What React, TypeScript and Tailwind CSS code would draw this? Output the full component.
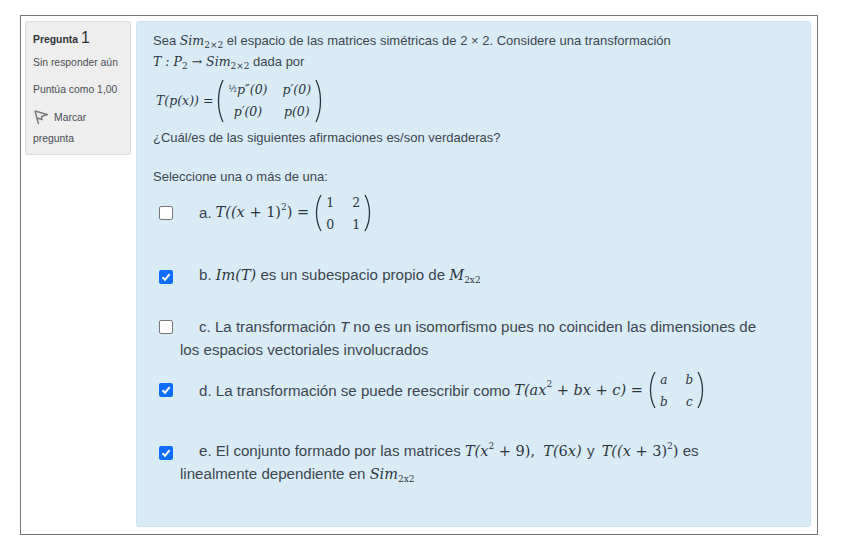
import React from "react";

const SANS = "font-['Liberation_Sans',Arial,sans-serif]";

// math runs: wide slab italic stands in for the MathJax TeX glyphs
const M: React.FC<{ children: React.ReactNode; className?: string }> = ({ children, className = "" }) => (
  <span className={`font-['DejaVu_Serif',serif] italic text-[#2c353e] whitespace-nowrap indent-0 leading-none ${className}`}>{children}</span>
);

const N: React.FC<{ children: React.ReactNode }> = ({ children }) => <span className="not-italic">{children}</span>;

const Sub: React.FC<{ children: React.ReactNode }> = ({ children }) => (
  <sub className="text-[9px] align-[-1px] leading-none not-italic">{children}</sub>
);

const Sup: React.FC<{ children: React.ReactNode }> = ({ children }) => (
  <sup className="text-[9px] align-[3px] leading-none not-italic">{children}</sup>
);

const Paren: React.FC<{ side: "l" | "r"; h: number }> = ({ side, h }) => (
  <svg width="9" height={h} viewBox={`0 0 9 ${h}`} className="shrink-0">
    <path
      d={side === "l" ? `M8 1 C2 ${h * 0.3} 2 ${h * 0.7} 8 ${h - 1}` : `M1 1 C7 ${h * 0.3} 7 ${h * 0.7} 1 ${h - 1}`}
      fill="none"
      stroke="#2c353e"
      strokeWidth="1.3"
    />
  </svg>
);

const Matrix: React.FC<{ rows: React.ReactNode[][]; h: number; gap: string }> = ({ rows, h, gap }) => (
  <span className="inline-flex items-center align-middle indent-0">
    <Paren side="l" h={h} />
    <span className={`inline-grid grid-cols-[auto_auto] ${gap} px-[4px] text-center`}>
      {rows.flat().map((c, i) => (
        <span key={i} className="leading-[22px]">
          {c}
        </span>
      ))}
    </span>
    <Paren side="r" h={h} />
  </span>
);

const Box: React.FC<{ checked?: boolean }> = ({ checked }) =>
  checked ? (
    <span className="inline-flex w-[14px] h-[14px] mr-[26px] rounded-[2px] bg-[#0d6efd] items-center justify-center align-[-2px] indent-0 shrink-0">
      <svg width="10" height="10" viewBox="0 0 10 10">
        <path d="M1.5 5.2 L4 7.8 L8.6 2.2" fill="none" stroke="#fff" strokeWidth="2" />
      </svg>
    </span>
  ) : (
    <span className="inline-block w-[14px] h-[14px] mr-[26px] rounded-[2px] bg-white border border-[#777] align-[-2px] indent-0 shrink-0" />
  );

const Option: React.FC<{ className: string; children: React.ReactNode }> = ({ className, children }) => (
  <div className={`pl-[27px] -indent-[21px] text-[15.1px] leading-[23px] ${className}`}>{children}</div>
);

const MatrixOption: React.FC<{ className: string; children: React.ReactNode }> = ({ className, children }) => (
  <div className={`pl-[6px] flex items-center text-[15.1px] leading-[23px] ${className}`}>{children}</div>
);

export default function App() {
  return (
    <div className={`w-[849px] h-[547px] bg-white pt-[15px] pl-[20px] text-[#3c4650] ${SANS}`}>
      <div className="w-[798px] h-[520px] border border-[#777] flex gap-[5px] pt-[5px] pl-[4px]">
        <div className="w-[106px] h-[134px] bg-[#eeeeee] border border-[#dedede] rounded-[2px] pl-[7px] pt-[7px] text-[10.4px] text-[#4a4f55]">
          <div className="font-bold text-[#2e3338] leading-[18px]">
            Pregunta <span className="text-[16px] font-normal">1</span>
          </div>
          <div className="mt-[7px] leading-[14px]">Sin responder aún</div>
          <div className="mt-[13px] leading-[14px]">Puntúa como 1,00</div>
          <div className="mt-[13px] flex items-center gap-[6px] leading-[14px]">
            <svg width="14" height="15" viewBox="0 0 14 15" className="shrink-0 ml-[1px]">
              <path d="M1 1 L13 4.5 L7.5 6.5 L8 9.5 L3 8 M1 1 L4.5 14" fill="none" stroke="#777" strokeWidth="1.4" />
            </svg>
            <span>Marcar</span>
          </div>
          <div className="mt-[7px] leading-[14px]">pregunta</div>
        </div>

        <div className="w-[675px] h-[506px] bg-[#d9ecf6] border border-[#c9e6f2] rounded-[3px] pl-[16px] pr-[40px] pt-[8px] text-[13px]">
          <div className="h-[21px] leading-[21px]">
            Sea <M className="text-[12.5px]">Sim<Sub>2×2</Sub></M> el espacio de las matrices simétricas de 2 × 2. Considere una transformación
          </div>
          <div className="h-[21px] leading-[21px]">
            <M className="text-[12.5px]">T : P<Sub>2</Sub> <N>→</N> Sim<Sub>2×2</Sub></M> dada por
          </div>
          <div className="mt-[6px] ml-[3px] h-[46px] flex items-center">
            <M className="text-[12.5px]">T(p(x)) <N>=</N></M>
            <span className="ml-[2px] flex">
              <Matrix
                h={44}
                gap="gap-x-[15px]"
                rows={[
                  [<M className="text-[12.5px]"><span className="not-italic text-[9px] align-[2px]">½</span>p″(0)</M>, <M className="text-[12.5px]">p′(0)</M>],
                  [<M className="text-[12.5px]">p′(0)</M>, <M className="text-[12.5px]">p(0)</M>],
                ]}
              />
            </span>
          </div>
          <div className="mt-[3px] leading-[21px]">¿Cuál/es de las siguientes afirmaciones es/son verdaderas?</div>
          <div className="mt-[19px] leading-[20px]">Seleccione una o más de una:</div>

          <MatrixOption className="mt-[4px] h-[43px]">
            <Box />
            <span>a.</span>
            <M className="ml-[4px] text-[14.5px]">T((x <N>+ 1)</N><Sup>2</Sup><N>) =</N></M>
            <span className="ml-[4px] flex">
              <Matrix
                h={38}
                gap="gap-x-[18px]"
                rows={[
                  [<M className="text-[12.5px]"><N>1</N></M>, <M className="text-[12.5px]"><N>2</N></M>],
                  [<M className="text-[12.5px]"><N>0</N></M>, <M className="text-[12.5px]"><N>1</N></M>],
                ]}
              />
            </span>
          </MatrixOption>

          <Option className="mt-[29px]">
            <Box checked />
            b. <M className="text-[14.5px]">Im(T)</M> es un subespacio propio de <M className="text-[14.5px]">M<Sub>2x2</Sub></M>
          </Option>

          <Option className="mt-[29px]">
            <Box />
            c. La transformación <span className="italic">T</span> no es un isomorfismo pues no coinciden las dimensiones de los espacios vectoriales involucrados
          </Option>

          <MatrixOption className="mt-[8px] h-[42px]">
            <Box checked />
            <span>d. La transformación se puede reescribir como</span>
            <M className="ml-[4px] text-[14.5px]">T(ax<Sup>2</Sup> <N>+</N> bx <N>+</N> c) <N>=</N></M>
            <span className="ml-[4px] flex">
              <Matrix
                h={38}
                gap="gap-x-[18px]"
                rows={[
                  [<M className="text-[12px]">a</M>, <M className="text-[12px]">b</M>],
                  [<M className="text-[12px]">b</M>, <M className="text-[12px]">c</M>],
                ]}
              />
            </span>
          </MatrixOption>

          <Option className="mt-[28px]">
            <Box checked />
            e. El conjunto formado por las matrices <M className="text-[14.5px]">T(x<Sup>2</Sup> <N>+ 9),</N></M>
            {" "}<M className="ml-[4px] text-[14.5px]">T(<N>6</N>x)</M> <span className="mx-[1px]">y</span> <M className="ml-[2px] text-[14.5px]">T((x <N>+ 3)</N><Sup>2</Sup><N>)</N></M> es linealmente dependiente en <M className="text-[14.5px]">Sim<Sub>2x2</Sub></M>
          </Option>
        </div>
      </div>
    </div>
  );
}
